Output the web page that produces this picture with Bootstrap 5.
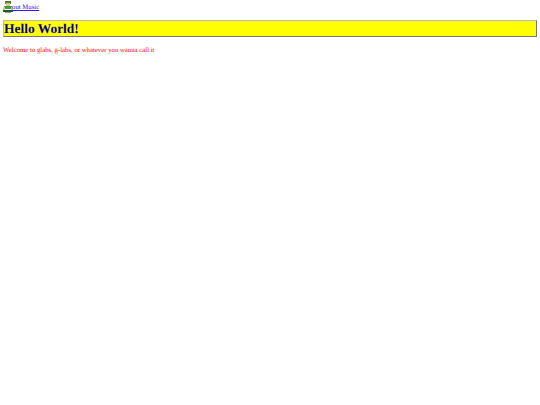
<!DOCTYPE html>
<html lang="en"><head><meta charset="utf-8"><title>Hello World</title>
<link href="https://cdn.jsdelivr.net/npm/bootstrap@5.3.0/dist/css/bootstrap.min.css" rel="stylesheet">
<style>
body{font-family:"Liberation Serif",serif;font-size:6.75px;line-height:normal;color:#000;background:#fff;padding:0 3px;text-rendering:geometricPrecision;}
.music-link{display:flex;align-items:flex-end;margin-left:-1px;height:13px;color:#22e;text-decoration:underline;}
.music-link svg{width:12px;height:13px;flex:none;margin-right:-2px;}
.music-link span{line-height:9px;margin-bottom:1px;}
.hello{margin:7px 0 0;border:1px solid #777;border-color:#bbb #777 #777 #bbb;background:#ff0;color:#000090;font-family:"Liberation Serif",serif;font-size:13.44px;font-weight:700;height:17px;line-height:15px;padding:0;box-sizing:border-box;}
.welcome{margin:10px 0 0;color:#f00;}
</style></head><body>
<a class="music-link" href="#"><svg viewBox="0 0 12 13"><rect x="3" y="1" width="6" height="3" fill="#5f7a35"/><rect x="4" y="3" width="4" height="3" fill="#d8c890"/><rect x="2" y="6" width="8" height="3" fill="#3f9a4a"/><rect x="1" y="7" width="2" height="3" fill="#d8d060"/><rect x="9" y="7" width="2" height="3" fill="#d8d060"/><rect x="1" y="10" width="10" height="2" fill="#1f5a2e"/><rect x="3" y="12" width="6" height="1" fill="#8aa878"/></svg><span>out Music</span></a>
<h1 class="hello">Hello World!</h1>
<p class="welcome">Welcome to glabs, g-labs, or whatever you wanna call it</p>
<script src="https://cdn.jsdelivr.net/npm/bootstrap@5.3.0/dist/js/bootstrap.bundle.min.js"></script>
</body></html>
